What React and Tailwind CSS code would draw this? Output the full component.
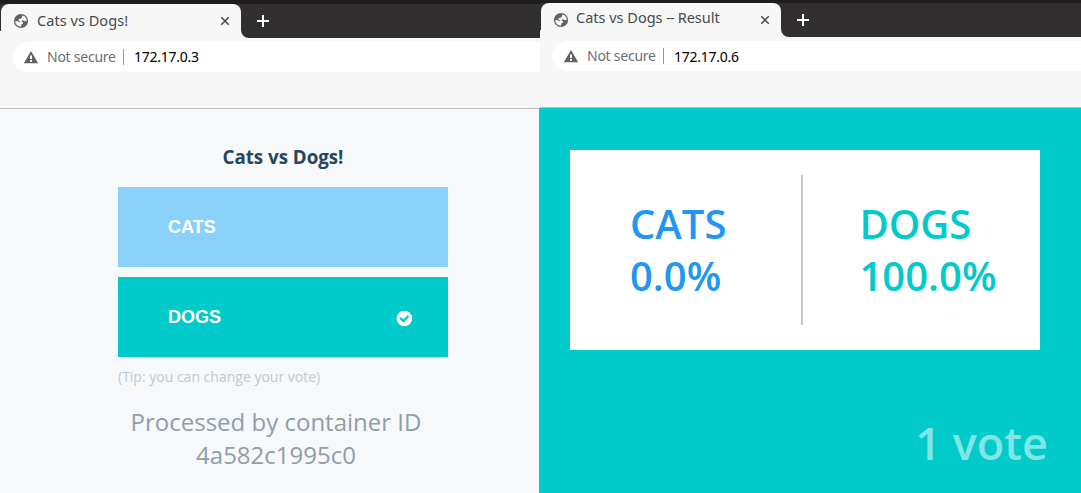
import React from "react";

function Globe({ className }) {
  return (
    <svg viewBox="0 0 16 16" className={className}>
      <circle cx="8" cy="8" r="7.1" fill="#5f6368" />
      <path fill="#f7f7f7" d="M9 2.4 11.6 3.2 13.5 5.8 13.7 7.7 11.7 8.2 10.2 7.3 8.6 7.7 8.3 8.3 10 9.2 10 10.6 8.4 11.6 8 13.7 5 13.1 2.7 10.7 2.2 8 5.2 8.2 6.6 9.4 7.3 8.7 5.6 7.4 5.6 6.1 7.6 5.8 9 4.4Z" />
    </svg>
  );
}

function Warning({ className }) {
  return (
    <svg viewBox="0 0 16 16" className={className}>
      <path fill="#5f6368" fillRule="evenodd" d="M8 2 15.2 14.2H.8ZM7 6.6V10H9V6.6ZM7 11V12.8H9V11Z" />
    </svg>
  );
}

function Check({ className }) {
  return (
    <svg viewBox="0 0 16 16" className={className} fill="none">
      <circle cx="8.4" cy="8.5" r="7.8" fill="#fff" />
      <path d="M4.2 7.9 7.4 11 12.5 6" stroke="#00cbca" strokeWidth="2.4" />
    </svg>
  );
}

function Cross({ className, d, width }) {
  return (
    <svg viewBox="0 0 12 12" className={className} fill="none" stroke="currentColor" strokeWidth={width}>
      <path d={d} />
    </svg>
  );
}

function BrowserTop({ title, address, first }) {
  return (
    <header className="shrink-0 bg-[#f7f7f7] font-['Noto_Sans',sans-serif]">
      <div className={`flex bg-[#322f30] border-t-[#1e1c1d] ${first ? "h-[38px] border-t-4" : "h-[37px] border-t-[3px]"}`}>
        <div className="-mr-2 h-full w-3 shrink-0 bg-linear-to-b from-[#322f30] from-80% to-[#f7f7f7] to-80%" />
        <div className="-ml-[3px] flex h-[34px] w-60 shrink-0 rounded-t-lg bg-[#f7f7f7] pl-3">
          <Globe className="mt-[9px] size-4 shrink-0" />
          <span className={`w-[184px] whitespace-nowrap text-[14.5px] leading-5 text-[#45494d] ${first ? "ml-2 mt-[6px] tracking-[0.05px]" : "ml-[7px] mr-px mt-[4px]"}`}>
            {title}
          </span>
          <Cross className="-ml-px mt-3 size-[10px] shrink-0 text-[#45494d]" width={1.8} d="M1.5 1.5 10.5 10.5M10.5 1.5 1.5 10.5" />
        </div>
        <div className="flex-1 bg-[#f7f7f7]">
          <div className="h-full rounded-bl-lg bg-[#322f30] pl-4 pt-[11px]">
            <Cross className="size-3 text-white" width={2} d="M6 0V12M0 6H12" />
          </div>
        </div>
      </div>
      <div className="ml-[13px] mt-1 flex h-[30px] rounded-l-full bg-white pl-2.5">
        <Warning className="mt-[6.5px] size-4" />
        <span className="ml-2 mt-[5px] w-[69px] whitespace-nowrap text-[14px] leading-5 tracking-[-0.25px] text-[#6b6f73]">Not secure</span>
        <span className="ml-[7px] mt-[7px] h-4 w-px bg-[#96999c]" />
        <span className={`ml-[10px] whitespace-nowrap text-[14px] leading-5 tracking-[-0.25px] text-black ${first ? "mt-[5px]" : "mt-[6px]"}`}>{address}</span>
      </div>
      <div className="h-[37px] border-b border-[#bdbdbd]" />
    </header>
  );
}

function Choice({ label, className, selected }) {
  return (
    <button className={`flex h-20 w-full items-center justify-between pl-[50px] pr-[36px] text-left font-['Liberation_Sans',Arial,sans-serif] text-[18px] font-bold text-white ${className}`}>
      <span>{label}</span>
      {selected && <Check className="mt-[2px] size-4 overflow-visible" />}
    </button>
  );
}

function VotePage() {
  return (
    <main className="flex-1 bg-[#f7f8fa] pl-[118px] pt-[35px]">
      <div className="w-[330px]">
        <h1 className="text-center text-[18.72px] font-bold leading-[26px] text-[#254661]">Cats vs Dogs!</h1>
        <div className="mt-[17px] flex flex-col gap-2.5">
          <Choice label="CATS" className="bg-[#8ad1fa]" />
          <Choice label="DOGS" className="bg-[#00cbca]" selected />
        </div>
        <p className="mt-2.5 text-[14px] leading-5 text-[#c0c9ce]">(Tip: you can change your vote)</p>
        <p className="mt-[18px] w-[316px] text-center text-[24px] leading-[33px] text-[#8f9ea8]">
          Processed by container ID
          <br />
          4a582c1995c0
        </p>
      </div>
    </main>
  );
}

function Score({ label, value, className }) {
  return (
    <div className={`flex flex-col justify-center text-[40px] font-semibold leading-[52px] ${className}`}>
      <span>{label}</span>
      <span>{value}</span>
    </div>
  );
}

function ResultPage() {
  return (
    <main className="-ml-px flex-1 bg-[#00cbca] pl-[31px] pt-[42px]">
      <div className="flex h-[200px] w-[470px] items-center bg-white">
        <Score label="CATS" value="0.0%" className="w-[231px] pl-[60px] text-[#2196f3]" />
        <div className="h-[150px] w-0.5 bg-[#c0c9ce]" />
        <Score label="DOGS" value="100.0%" className="pl-[56.5px] text-[#00cbca]" />
      </div>
      <p className="mt-[63px] pr-[33px] text-right text-[45px] font-semibold leading-[60px] text-[#80e5e4]">1 vote</p>
    </main>
  );
}

export default function App() {
  return (
    <div className="flex h-[493px] w-[1081px] overflow-hidden font-['Open_Sans',sans-serif]">
      <section className="flex w-[540px] flex-col">
        <BrowserTop title="Cats vs Dogs!" address="172.17.0.3" first />
        <VotePage />
      </section>
      <section className="flex w-[541px] flex-col">
        <BrowserTop title={<>Cats vs Dogs <span className="tracking-[-0.9px]">--</span> Result</>} address="172.17.0.6" />
        <ResultPage />
      </section>
    </div>
  );
}
